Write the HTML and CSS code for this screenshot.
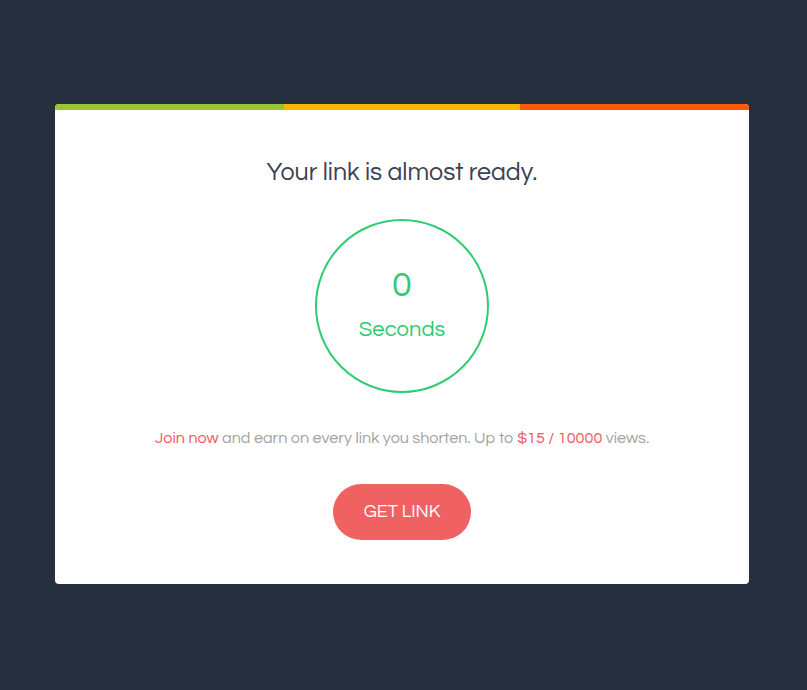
FILE: index.html
```html
<!DOCTYPE html>
<html>
<head>
<meta charset="utf-8">
<link rel="stylesheet" href="styles.css">
</head>
<body>
<div class="page">
  <div class="card">
    <div class="bar">
      <div class="seg seg-green"></div>
      <div class="seg seg-yellow"></div>
      <div class="seg seg-orange"></div>
    </div>
    <div class="content">
      <h1 class="title">Your link is almost ready.</h1>
      <div class="timer">
        <div class="count">0</div>
        <div class="unit">Seconds</div>
      </div>
      <p class="promo"><span class="hl">Join now</span> and earn on every link you shorten. Up to <span class="hl">$15 / 10000</span> views.</p>
      <a class="btn" href="#">GET LINK</a>
    </div>
  </div>
</div>
</body>
</html>
```
FILE: styles.css
```css
html, body {
  margin: 0;
  padding: 0;
  background: #252f3e;
  font-family: "Questrial", "Liberation Sans", Arial, sans-serif;
}
.page {
  padding: 104px 58px 0 55px;
}
.card {
  width: 694px;
  height: 480px;
  background: #fff;
  border-radius: 4px;
  overflow: hidden;
}
.bar {
  display: flex;
  height: 6px;
}
.seg { height: 6px; }
.seg-green { width: 229px; background: #9bc634; }
.seg-yellow { width: 236px; background: #ffb800; }
.seg-orange { flex: 1; background: #ff5a0a; }
.content {
  display: flex;
  flex-direction: column;
  align-items: center;
}
.title {
  margin: 46px 0 0;
  font-size: 25px;
  font-weight: normal;
  color: #3d4152;
  line-height: 32px;
}
.timer {
  margin-top: 31px;
  width: 170px;
  height: 170px;
  border: 2px solid #2ecc71;
  border-radius: 50%;
  display: flex;
  flex-direction: column;
  align-items: center;
  justify-content: center;
  color: #2ecc71;
}
.count {
  font-size: 36px;
  line-height: 40px;
  margin-top: -5px;
}
.unit {
  font-size: 22px;
  line-height: 26px;
  margin-top: 12px;
}
.promo {
  margin: 35px 0 0;
  font-size: 16.2px;
  line-height: 20px;
  color: #a3a3a3;
}
.hl { color: #f0585c; }
.btn {
  margin-top: 36px;
  width: 138px;
  height: 56px;
  border-radius: 28px;
  background: #f06262;
  color: #fff;
  text-decoration: none;
  font-size: 18px;
  line-height: 54px;
  display: flex;
  align-items: center;
  justify-content: center;
}
```
